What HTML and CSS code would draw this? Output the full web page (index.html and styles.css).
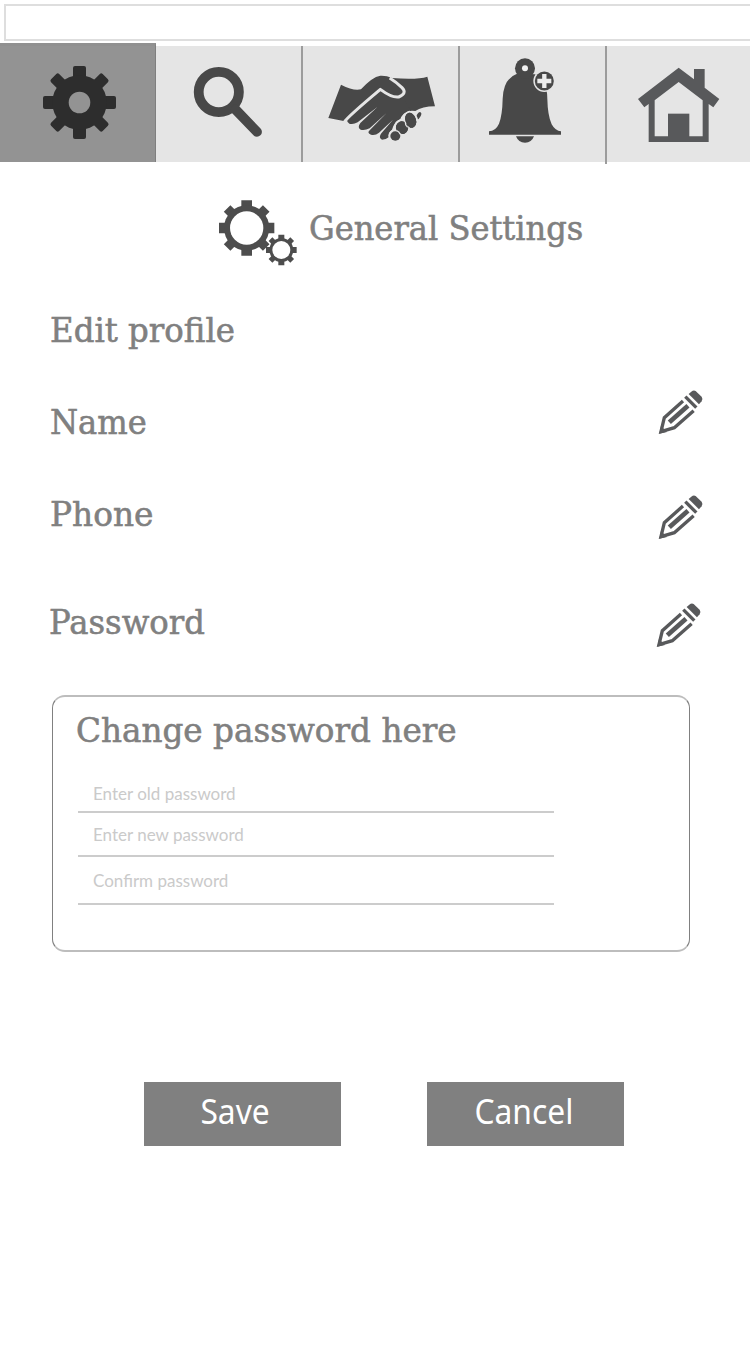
FILE: index.html
```html
<!DOCTYPE html>
<html lang="en">
<head>
<meta charset="utf-8">
<title>General Settings</title>
<link rel="stylesheet" href="styles.css">
</head>
<body>
<svg class="defs" aria-hidden="true">
  <symbol id="pencil" viewBox="50 28 145 140">
    <path d="M145 43L153 36Q160 30 166 34L184 51Q189 58 184 65L176 74Z"/>
    <path d="M135 51L168 84" fill="none" stroke="#58595b" stroke-width="10"/>
    <path d="M128 64L72 114L62 156L102 144L160 93" fill="none" stroke="#58595b" stroke-width="10"/>
    <path d="M87 128L143 78" fill="none" stroke="#58595b" stroke-width="14"/>
    <path d="M57 162L62 139L80 157Z"/>
  </symbol>
</svg>
<div class="address"></div>
<nav class="tabs">
  <a class="tab tab-settings">
    <svg class="gear" viewBox="-37.5 -37.5 74 74">
      <rect x="-6.5" y="-36.5" width="13" height="73" rx="2"/><rect x="-36.5" y="-6.5" width="73" height="13" rx="2"/>
      <g transform="rotate(45)"><rect x="-5.7" y="-36.5" width="11.4" height="73" rx="2"/><rect x="-36.5" y="-5.7" width="73" height="11.4" rx="2"/></g>
      <circle r="27.2"/><circle r="10.8" fill="#939393"/>
    </svg>
  </a>
  <a class="tab tab-search">
    <svg class="lens" viewBox="193 66 71 72" fill="none" stroke="#484848">
      <circle cx="218.8" cy="92" r="20.1" stroke-width="9.8"/>
      <path d="M235.500 109.500L257 131.800" stroke-width="9.800" stroke-linecap="round"/>
    </svg>
  </a>
  <a class="tab tab-deals">
    <svg class="shake" viewBox="80 100 330 210">
      <path d="M122 135Q160 155 182 149Q215 112 240 108Q258 107 275 115Q350 121 381 111L404 200Q365 200 345 214Q325 210 310 221Q300 240 280 243L240 155L130 244L84 235Z"/>
      <path d="M240 155L145 230Q134 244 147 252Q158 256 172 248L232 201L180 250Q170 264 181 270Q192 274 208 266L258 221L208 272Q199 280 212 285Q225 288 236 279L278 240L243 281Q233 294 245 300Q257 300 266 292Q261 280 275 270Q281 247 300 238Q306 217 332 215L310 175Z"/>
      <path d="M133 246Q140 233 240 149Q275 175 295 172Q322 161 305 144Q289 128 268 115" fill="none" stroke="#e5e5e5" stroke-width="9" stroke-linejoin="round"/>
      <g stroke="#e5e5e5" stroke-width="12" paint-order="stroke">
        <ellipse cx="355" cy="228" rx="6" ry="12" transform="rotate(28 355 228)"/>
        <ellipse cx="331" cy="242" rx="16" ry="23" transform="rotate(-18 331 242)"/>
        <ellipse cx="305" cy="264" rx="18" ry="19" transform="rotate(-25 305 264)"/>
        <ellipse cx="285" cy="289" rx="15" ry="14"/>
      </g>
      <g>
        <ellipse cx="331" cy="242" rx="16" ry="23" transform="rotate(-18 331 242)"/>
        <ellipse cx="305" cy="264" rx="18" ry="19" transform="rotate(-25 305 264)"/>
      </g>
      <path d="M315 247Q314 256 322 263M289 273Q296 275 300 284" fill="none" stroke="#e5e5e5" stroke-width="4"/>
    </svg>
  </a>
  <a class="tab tab-alerts">
    <svg class="bell" viewBox="93 50 230 262">
      <path d="M102 283V273Q122 272 132 250Q142 225 143 175Q145 115 186 100L240 102Q277 120 277 175Q278 225 290 252Q301 272 318 273V283Z"/>
      <circle cx="210" cy="84" r="30"/><circle cx="210" cy="84" r="9" fill="#f1f1f1"/>
      <path d="M183 288H237Q230 307 210 307Q190 307 183 288Z"/>
      <circle cx="268" cy="122" r="33" fill="#e5e5e5"/><circle cx="268" cy="122" r="28.500"/>
      <path d="M268 101V143M247 122H289" stroke="#ececec" stroke-width="13"/>
    </svg>
  </a>
  <a class="tab tab-home">
    <svg class="home" viewBox="112 80 250 228">
      <path fill-rule="evenodd" d="M237 82L283 117V86H315V142L359 176L341 201L327 191V305H147V191L134 201L115 176ZM165 288V180L237 125L309 180V288Z"/>
      <path d="M205 220H269V290H205Z"/>
    </svg>
  </a>
</nav>
<main>
  <header class="title">
    <svg class="gears" viewBox="38 28 240 202">
      <g transform="translate(124 115)">
        <path d="M-16-83H16V83H-16ZM-83-16H83V16H-83Z"/>
        <path transform="rotate(45)" d="M-14-83H14V83H-14ZM-83-14H83V14H-83Z"/>
        <circle r="68"/><circle r="50" fill="#fff"/>
      </g>
      <g transform="translate(228 181)">
        <path d="M-9-46H9V46H-9ZM-46-9H46V9H-46Z"/>
        <path transform="rotate(45)" d="M-8-46H8V46H-8ZM-46-8H46V8H-46Z"/>
        <circle r="36"/><circle r="27" fill="#fff"/>
      </g>
    </svg>
    <h1>General Settings</h1>
  </header>
  <h2 class="row row-edit"><span class="t-edit">Edit profile</span></h2>
  <div class="row row-name"><span class="t-name">Name</span><svg class="pencil"><use href="#pencil"/></svg></div>
  <div class="row row-phone"><span class="t-phone">Phone</span><svg class="pencil"><use href="#pencil"/></svg></div>
  <div class="row row-pass"><span class="t-pass">Password</span><svg class="pencil"><use href="#pencil"/></svg></div>
  <section class="card">
    <h2 class="t-change">Change password here</h2>
    <div class="field f-old"><span>Enter old password</span></div>
    <div class="field f-new"><span>Enter new password</span></div>
    <div class="field f-confirm"><span>Confirm password</span></div>
  </section>
  <div class="actions">
    <button class="save"><span>Save</span></button>
    <button class="cancel"><span>Cancel</span></button>
  </div>
</main>
</body>
</html>
```
FILE: styles.css
```css
* { box-sizing: border-box; }
body { margin: 0; width: 750px; height: 1365px; overflow: hidden; background: #fff; color: #808080; font-family: "DejaVu Serif", serif; }
svg { display: block; flex: none; }
.defs { display: none; }
.address { height: 37px; margin: 4px 0 0 4px; border: 2px solid #dedede; border-right: 0; }
.tabs { display: flex; height: 123px; padding-top: 5px; }
.tab { height: 116px; background: #e5e5e5; fill: #484848; }
.tab-settings { width: 156px; height: 119px; margin-top: -3px; padding: 22px 0 0 42px; background: #939393; border-top: 3px solid #909090; border-right: 1px solid #7f7f7f; fill: #2d2d2d; }
.gear { width: 74px; height: 74px; margin-top: -3px; }
.tab-search { width: 145px; padding: 20px 0 0 37px; }
.lens { width: 71px; height: 72px; }
.tab-deals { width: 157px; padding: 27.300px 0 0 23.700px; border-left: 2px solid #9c9c9c; }
.shake { width: 110px; height: 70px; }
.tab-alerts { width: 147px; padding: 10.700px 0 0 26px; border-left: 2px solid #9c9c9c; }
.bell { width: 76.670px; height: 87.330px; }
.tab-home { width: 145px; height: 118px; padding: 20.700px 0 0 30px; border-left: 2px solid #9c9c9c; background: linear-gradient(#e5e5e5, #e5e5e5) no-repeat 0 0 / 100% 116px; fill: #58595b; }
.home { width: 83.330px; height: 76px; }
h1, h2 { margin: 0; font-weight: 400; }
h1, h2, .row { font-size: 34px; line-height: 40px; white-space: nowrap; }
h1, .row, .t-change { -webkit-text-stroke: 0.600px #808080; }
h1, .row span, .t-change { transform-origin: left; }
.title { display: flex; height: 67px; margin-top: 35px; padding-left: 218px; fill: #4d4d4d; }
.gears { width: 80px; height: 67.330px; }
h1 { margin: 9px 0 0 10.500px; transform: scaleX(0.945); }
.row { display: flex; justify-content: space-between; height: 47px; padding: 0 45px 0 50px; }
.pencil { width: 48.300px; height: 46.670px; fill: #58595b; -webkit-text-stroke: 0; }
.row-edit { margin-top: 44px; }
.row-name { margin-top: 32px; }
.row-name span { padding-top: 13px; }
.row-phone { margin-top: 58px; }
.row-pass { margin-top: 61px; padding-left: 49px; padding-right: 46.300px; }
.t-edit { transform: scaleX(0.953); }
.t-name { transform: scaleX(0.945); }
.t-phone { transform: scaleX(0.965); }
.t-pass { transform: scaleX(0.95); }
.card { width: 638px; height: 257px; margin: 46px 0 0 52px; padding: 13px 0 0 23px; border: 1px solid #808080; border-top: 2px solid #bdbdbd; border-bottom: 2px solid #bdbdbd; border-radius: 13px; }
.t-change { transform: scaleX(0.96); }
.field { width: 476px; margin-left: 2px; padding-left: 15px; border-bottom: 2px solid #ccc; color: #cacaca; font: 17px/20px Lato, sans-serif; display: flex; align-items: flex-end; }
.f-old { height: 63px; padding-bottom: 7px; }
.f-new { height: 44px; padding-bottom: 10px; }
.f-confirm { height: 48px; padding-bottom: 12px; }
.actions { display: flex; gap: 86px; margin: 130px 0 0 144px; }
button { width: 197px; height: 64px; padding: 0 14px 7px 0; border: 0; background: #808080; color: #fff; font: 34px/40px "Noto Sans", sans-serif; }
button span { display: inline-block; transform: scaleX(0.935); }
.cancel { padding-right: 4px; }
```
